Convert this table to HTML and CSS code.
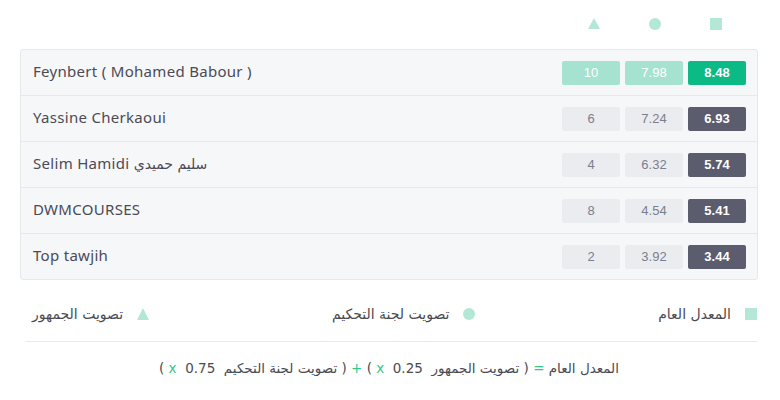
FILE: index.html
```html
<!DOCTYPE html>
<html lang="en">
<head>
<meta charset="utf-8">
<link rel="stylesheet" href="styles.css">
</head>
<body>
<div class="page">
  <div class="head">
    <span class="hcell"><svg width="12" height="11" viewBox="0 0 12 11"><polygon points="6,0 12,11 0,11" fill="#b4e8d6"/></svg></span>
    <span class="hcell"><svg width="12" height="12" viewBox="0 0 12 12"><circle cx="6" cy="6" r="6" fill="#b4e8d6"/></svg></span>
    <span class="hcell"><svg width="12" height="12" viewBox="0 0 12 12"><rect width="12" height="12" fill="#b4e8d6"/></svg></span>
  </div>
  <div class="table">
    <div class="row">
      <span class="name">Feynbert ( Mohamed Babour )</span>
      <span class="scores"><span class="box lg">10</span><span class="box lg">7.98</span><span class="box green">8.48</span></span>
    </div>
    <div class="row">
      <span class="name">Yassine Cherkaoui</span>
      <span class="scores"><span class="box">6</span><span class="box">7.24</span><span class="box dark">6.93</span></span>
    </div>
    <div class="row">
      <span class="name">Selim Hamidi <span class="ar">سليم حميدي</span></span>
      <span class="scores"><span class="box">4</span><span class="box">6.32</span><span class="box dark">5.74</span></span>
    </div>
    <div class="row">
      <span class="name">DWMCOURSES</span>
      <span class="scores"><span class="box">8</span><span class="box">4.54</span><span class="box dark">5.41</span></span>
    </div>
    <div class="row">
      <span class="name">Top tawjih</span>
      <span class="scores"><span class="box">2</span><span class="box">3.92</span><span class="box dark">3.44</span></span>
    </div>
  </div>
  <div class="legend" dir="rtl">
    <span class="litem"><svg width="12" height="12" viewBox="0 0 12 12"><rect width="12" height="12" fill="#b4e8d6"/></svg><span>المعدل العام</span></span>
    <span class="litem"><svg width="12" height="12" viewBox="0 0 12 12"><circle cx="6" cy="6" r="6" fill="#b4e8d6"/></svg><span>تصويت لجنة التحكيم</span></span>
    <span class="litem"><svg width="12" height="12" viewBox="0 0 12 12"><polygon points="6,0 12,12 0,12" fill="#b4e8d6"/></svg><span>تصويت الجمهور</span></span>
  </div>
  <div class="formula" dir="rtl">المعدل العام <span class="op">=</span> ( تصويت الجمهور&nbsp; <span class="op">x</span>&nbsp; 0.25 ) <span class="op">+</span> ( تصويت لجنة التحكيم&nbsp; <span class="op">x</span>&nbsp; 0.75 )</div>
</div>
</body>
</html>
```
FILE: styles.css
```css
* { box-sizing: border-box; }
body {
  margin: 0;
  background: #fff;
  font-family: "Noto Sans", "Open Sans", sans-serif;
  color: #4b4b57;
}
.page {
  width: 780px;
  padding: 18px 22px 0 20px;
}
.head {
  display: flex;
  justify-content: flex-end;
  padding-right: 12px;
  height: 31px;
}
.hcell {
  width: 61px;
  display: flex;
  justify-content: center;
  align-items: flex-start;
}
.table {
  border: 1px solid #e6e8ec;
  border-radius: 3px;
  background: #f6f7f9;
}
.row {
  height: 46px;
  display: flex;
  align-items: center;
  justify-content: space-between;
  padding: 0 11px 0 12px;
  border-top: 1px solid #e6e8ec;
}
.row:first-child { border-top: none; height: 45px; }
.name {
  font-size: 15px;
  letter-spacing: 0.3px;
  color: #4b4a55;
  position: relative;
  top: -2px;
}
.ar { font-family: "DejaVu Sans", sans-serif; font-size: 14px; letter-spacing: 0; }
.scores {
  display: flex;
  gap: 5px;
}
.box {
  width: 58px;
  height: 24px;
  border-radius: 2px;
  background: #ebecf0;
  color: #7b7e8c;
  font-family: "Liberation Sans", Arial, sans-serif;
  font-size: 13px;
  display: flex;
  align-items: center;
  justify-content: center;
}
.box.lg { background: #a5e3d0; color: #fff; }
.box.green { background: #0cba86; color: #fff; font-weight: bold; }
.box.dark { background: #5b5c6d; color: #fff; font-weight: bold; }
.legend {
  display: flex;
  justify-content: space-between;
  align-items: center;
  margin: 26px 1px 0 6px;
  padding: 0 0 19px 6px;
  border-bottom: 1px solid #e8e9ec;
}
.litem {
  display: flex;
  align-items: center;
  gap: 14px;
  font-family: "DejaVu Sans", sans-serif;
  font-size: 14px;
  color: #4a4a52;
}
.formula {
  text-align: center;
  font-family: "DejaVu Sans", sans-serif;
  font-size: 13.5px;
  color: #4a4a52;
  margin-top: 18px;
  white-space: nowrap;
}
.op { color: #2fc98e; }
```
